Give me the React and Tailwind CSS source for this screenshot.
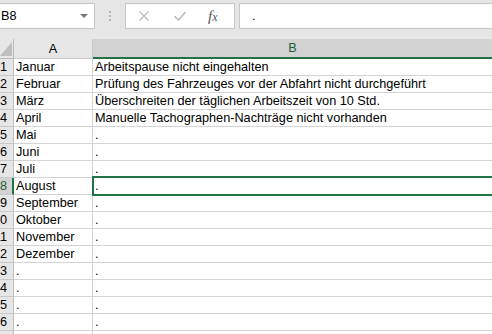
import React from "react";

const rows = [
  ["Januar", "Arbeitspause nicht eingehalten"],
  ["Februar", "Prüfung des Fahrzeuges vor der Abfahrt nicht durchgeführt"],
  ["März", "Überschreiten der täglichen Arbeitszeit von 10 Std."],
  ["April", "Manuelle Tachographen-Nachträge nicht vorhanden"],
  ["Mai", "."],
  ["Juni", "."],
  ["Juli", "."],
  ["August", "."],
  ["September", "."],
  ["Oktober", "."],
  ["November", "."],
  ["Dezember", "."],
  [".", "."],
  [".", "."],
  [".", "."],
  [".", "."],
  [".", "."],
];

const font = { fontFamily: '"Liberation Sans", Arial, sans-serif' };

export default function App() {
  return (
    <div className="w-[492px] h-[334px] overflow-hidden bg-white text-[12.7px] text-black" style={font}>
      {/* formula bar */}
      <div className="h-[39px] bg-[#e6e6e6] flex items-start pt-[3px]">
        <div className="ml-[-1px] w-[96px] h-[26px] bg-white border border-[#c6c6c6] flex items-center justify-between pr-[6px]">
          <span className="pl-[1px] leading-none pt-[1px]">B8</span>
          <span className="w-0 h-0 border-l-[4px] border-r-[4px] border-t-[4px] border-l-transparent border-r-transparent border-t-[#777]" />
        </div>
        <div className="w-[30px] h-[26px] flex flex-col items-center justify-center gap-[2px]">
          <span className="w-[2px] h-[2px] bg-[#b5b5b5]" />
          <span className="w-[2px] h-[2px] bg-[#b5b5b5]" />
          <span className="w-[2px] h-[2px] bg-[#b5b5b5]" />
        </div>
        <div className="w-[110px] h-[26px] bg-white border border-[#c6c6c6] flex items-center">
          <svg className="ml-[13px]" width="10" height="10" viewBox="0 0 10 10">
            <path d="M0.5 0.5 L9.5 9.5 M9.5 0.5 L0.5 9.5" stroke="#bdbdbd" strokeWidth="1.2" fill="none" />
          </svg>
          <svg className="ml-[25px]" width="12" height="10" viewBox="0 0 12 10">
            <path d="M0.5 5 L4.5 9 L11.5 1" stroke="#bdbdbd" strokeWidth="1.6" fill="none" />
          </svg>
          <span
            className="ml-[22px] italic text-[#555] text-[15px] leading-none"
            style={{ fontFamily: '"Liberation Serif", "Times New Roman", serif' }}
          >
            f<span className="text-[12px]">x</span>
          </span>
        </div>
        <div className="ml-[4px] flex-1 h-[26px] bg-white border border-r-0 border-[#c6c6c6] flex items-center pl-[12px]">
          <span className="leading-none">.</span>
        </div>
      </div>

      {/* column headers */}
      <div className="flex h-[20px]">
        <div className="w-[14px] h-full bg-[#e6e6e6] border-r border-b border-[#bdbdbd] relative overflow-hidden">
          <svg className="absolute left-0 bottom-[2px]" width="12" height="14" viewBox="0 0 12 14">
            <polygon points="12,0 12,14 0,14" fill="#bfbfbf" />
          </svg>
        </div>
        <div className="w-[79px] h-full bg-[#e6e6e6] border-r border-b border-[#c8c8c8] flex items-center justify-center leading-none pt-[1px]">
          A
        </div>
        <div className="flex-1 h-full bg-[#d2d2d2] border-b-2 border-[#217346] flex items-center justify-center leading-none text-[#1e5e3b] pt-[1px]">
          B
        </div>
      </div>

      {/* rows */}
      {rows.map(([a, b], i) => {
        const n = i + 1;
        const sel = n === 8;
        return (
          <div key={i} className="flex h-[17px]">
            <div
              className={
                "w-[14px] h-full overflow-hidden border-b border-[#c8c8c8] flex items-center justify-end " +
                (sel ? "bg-[#d2d2d2] border-r-2 border-r-[#217346] text-[#1e5e3b]" : "bg-[#e6e6e6] border-r border-r-[#bdbdbd]")
              }
            >
              <div className={"shrink-0 whitespace-nowrap text-right leading-[16px] " + (sel ? "pr-[5px]" : "pr-[6px]")}>{n}</div>
            </div>
            <div className="w-[79px] h-full border-r border-b border-[#d4d4d4] pl-[2px] leading-[16px] whitespace-nowrap overflow-hidden">
              {a}
            </div>
            <div className="flex-1 h-full border-b border-[#d4d4d4] pl-[2px] leading-[16px] whitespace-nowrap relative">
              {b}
              {sel && (
                <div className="absolute left-[-1px] top-[-2px] right-[-4px] bottom-[-2px] border-2 border-[#217346]" />
              )}
            </div>
          </div>
        );
      })}
    </div>
  );
}
